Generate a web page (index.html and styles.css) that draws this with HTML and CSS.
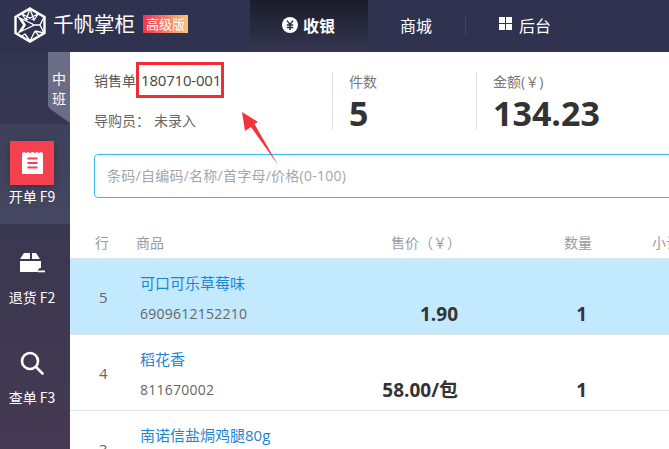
FILE: index.html
```html
<!DOCTYPE html>
<html lang="zh">
<head>
<meta charset="utf-8">
<title>千帆掌柜</title>
<link rel="stylesheet" href="styles.css">
</head>
<body>
<div class="app">
  <header class="topbar">
    <div class="brand">
      <svg class="logo" width="32" height="36" viewBox="0 0 32 36" fill="none" stroke="#fff">
        <path d="M16 1.500 L30.500 10 V26 L16 34.500 L1.500 26 V10 Z" stroke-width="2.400"/>
        <path d="M16 2 L8 7 L12 13 L16 2 L20 13 L24 7 L16 2 M8 7 L20 13 M24 7 L12 13 M24 7 L30 10 L26 18 L30 26 M26 18 L21 18 M21 24 L16 34 L11 27 L6 30 M21 24 L25 29 L16 34 M21 24 L30 26 M11 27 L16 34" stroke-width="1.300"/>
        <path d="M3 9 L22 18 L3 27 L9 18 Z" fill="#fff" stroke="none"/>
        <path d="M9 13 L19 18 L9 23 L12 18 Z" fill="#2f3350" stroke="none"/>
      </svg>
      <span class="brand-name">千帆掌柜</span>
      <span class="badge">高级版</span>
    </div>
    <nav class="nav">
      <a class="nav-item active">
        <svg width="16" height="16" viewBox="0 0 16 16"><circle cx="8" cy="8" r="8" fill="#fff"/><path d="M5 3.600 L8 7.400 L11 3.600 M4.800 8 H11.200 M4.800 10.400 H11.200 M8 7.400 V13" fill="none" stroke="#282a40" stroke-width="1.500"/></svg>
        <span>收银</span>
      </a>
      <a class="nav-item shop"><span>商城</span></a>
      <a class="nav-item back">
        <svg width="13" height="13" viewBox="0 0 13 13" fill="#fff"><rect width="6" height="6"/><rect x="7" width="6" height="6"/><rect y="7" width="6" height="6"/><rect x="7" y="7" width="6" height="6"/></svg>
        <span>后台</span>
      </a>
    </nav>
  </header>
  <div class="body">
    <aside class="sidebar">
      <div class="shift-row"><div class="shift">中<br>班</div></div>
      <div class="side-item current">
        <div class="side-icon red">
          <svg width="21" height="22" viewBox="0 0 21 22"><path d="M0 1 L2 0 L4 1 L6 0 L8 1 L10.500 0 L13 1 L15 0 L17 1 L19 0 L21 1 V22 H0 Z" fill="#fff"/><path d="M5.500 6.500 H15.500 M5.500 11 H15.500 M5.500 15.500 H15.500" stroke="#f4404f" stroke-width="2"/></svg>
        </div>
        <span>开单 F9</span>
      </div>
      <div class="side-item">
        <div class="side-icon">
          <svg width="25" height="20" viewBox="0 0 25 20" fill="#fff"><path d="M4 0 H10 V6 H0 Z M12 0 H16 L20 6 H12 Z M0 8 H21 V15 A3 3 0 0 0 18 19 H0 Z"/><rect x="18" y="17.500" width="7" height="1.800"/></svg>
        </div>
        <span>退货 F2</span>
      </div>
      <div class="side-item">
        <div class="side-icon">
          <svg width="24" height="24" viewBox="0 0 24 24" fill="none" stroke="#fff" stroke-width="2.600"><circle cx="10" cy="10" r="8"/><path d="M16 16 L22.500 22.500" stroke-linecap="round"/></svg>
        </div>
        <span>查单 F3</span>
      </div>
    </aside>
    <main class="main">
      <section class="summary">
        <div class="order">
          <div class="order-line"><span>销售单</span><span class="order-no">180710-001</span></div>
          <div class="order-line guide"><span>导购员：</span><span>未录入</span></div>
        </div>
        <div class="stat count">
          <div class="stat-label">件数</div>
          <div class="stat-value">5</div>
        </div>
        <div class="stat amount">
          <div class="stat-label">金额(￥)</div>
          <div class="stat-value">134.23</div>
        </div>
      </section>
      <div class="search">条码/自编码/名称/首字母/价格(0-100)</div>
      <section class="table">
        <div class="row head">
          <div>行</div><div>商品</div><div class="price">售价（￥）</div><div class="qty">数量</div><div class="sub">小计</div>
        </div>
        <div class="row item selected">
          <div class="idx">5</div>
          <div class="goods"><a>可口可乐草莓味</a><span>6909612152210</span></div>
          <div class="price val">1.90</div><div class="qty val">1</div><div></div>
        </div>
        <div class="row item">
          <div class="idx">4</div>
          <div class="goods"><a>稻花香</a><span>811670002</span></div>
          <div class="price val">58.00/包</div><div class="qty val">1</div><div></div>
        </div>
        <div class="row item">
          <div class="idx">3</div>
          <div class="goods"><a>南诺信盐焗鸡腿80g</a><span></span></div>
          <div></div><div></div><div></div>
        </div>
      </section>
    </main>
  </div>
  <svg class="arrow" width="38" height="54" viewBox="0 0 38 54"><path d="M0 0 L3 19 L9 15 L36 53 L12.500 12 L16 10 Z" fill="#f5333c"/></svg>
</div>
</body>
</html>
```

FILE: styles.css
```css
* { box-sizing: border-box; }
html, body { margin: 0; height: 100%; }
body {
  overflow: hidden;
  background: #fff;
  font-family: "Open Sans", "Noto Sans CJK SC", sans-serif;
  color: #555;
}
.app { position: relative; width: 669px; height: 449px; overflow: hidden; }

/* top bar */
.topbar { display: flex; height: 52px; background: #2f3350; color: #fff; }
.brand { display: flex; align-items: center; width: 250px; padding: 0 0 3px 14px; }
.logo { flex: none; }
.brand-name { margin-left: 7px; font-size: 20.500px; font-weight: 400; line-height: 1; }
.badge {
  margin-left: 8px; margin-top: -2px; width: 45px; height: 18px;
  background: linear-gradient(90deg, #f3334f, #fbc47c);
  font-size: 13px; line-height: 18px; text-align: center; white-space: nowrap;
}
.nav { display: flex; font-family: "Noto Sans CJK SC", sans-serif; }
.nav-item { display: flex; align-items: center; height: 52px; font-size: 16px; padding-bottom: 3px; }
.nav-item.active {
  width: 118px; padding-left: 32px; gap: 5px; font-weight: 700;
  background: linear-gradient(180deg, #1b1c2b, #33364f);
}
.nav-item.shop { width: 98px; padding-left: 32px; position: relative; }
.nav-item.shop::after {
  content: ""; position: absolute; right: 0; top: 17px; height: 18px; width: 1px; background: #434766;
}
.nav-item.back { padding-left: 33px; gap: 7px; }
.nav-item.back svg { margin-top: -3px; }

/* layout */
.body { display: flex; height: 397px; }
.sidebar {
  flex: none; width: 70px; display: flex; flex-direction: column;
  background: linear-gradient(180deg, #33354f, #443a52);
  color: #fff; font-size: 14px; font-family: "Noto Sans CJK SC", sans-serif;
}
.shift-row { display: flex; justify-content: flex-end; height: 72px; }
.shift {
  width: 22px; height: 71px; padding-top: 16px;
  background: #6b6c85; color: #fff; font-size: 14px; line-height: 20px; text-align: center;
  clip-path: polygon(0 0, 100% 0, 100% 100%, 82% 96%, 9% 80%, 0 76%);
}
.side-item { height: 100px; display: flex; flex-direction: column; align-items: center; padding: 17px 6px 0 0; }
.side-item > span { margin-top: 3px; line-height: 19px; white-space: nowrap; }
.side-item.current { background: linear-gradient(180deg, #3f415c, #45465f); }
.side-item.current > span { margin-top: 2px; }
.side-icon { width: 44px; height: 44px; display: flex; align-items: center; justify-content: center; }
.side-icon.red { background: #f4404f; box-shadow: 0 2px 8px rgba(0,0,0,.25); }

/* main */
.main { flex: none; width: 660px; }
.summary { display: flex; height: 102px; padding-top: 20px; }
.order { width: 262px; padding-left: 24px; font-size: 14px; color: #555; margin-top: -2px; }
.order-line { display: flex; align-items: center; height: 20px; white-space: nowrap; }
.order-no { margin-left: 5px; font-size: 15px; color: #444; letter-spacing: -0.200px; }
.guide { margin-top: 20px; gap: 4px; color: #666; }
.stat { border-left: 1px solid #e1e3ea; height: 58px; padding-left: 16px; }
.count { width: 144px; }
.amount { flex: 1; }
.stat-label { font-size: 14px; color: #777; line-height: 20px; }
.stat-value { font-size: 34px; font-weight: 700; color: #333; line-height: 43px; }

.search {
  margin-left: 24px; width: 620px; height: 44px; padding: 0 12px;
  border: 1px solid #3db7f0; border-radius: 4px;
  color: #a5a5aa; font-size: 14px; letter-spacing: 0.250px; line-height: 42px; white-space: nowrap;
}

.table { margin-top: 26px; }
.row { display: grid; grid-template-columns: 66px 182px 140px 134px 80px; }
.head {
  height: 35px; padding-top: 3px; align-items: center; color: #9a9aa2; font-size: 14px; line-height: 20px;
  border-bottom: 1px solid #e1e3ea;
}
.head > div:first-child { padding-left: 25px; }
.head .price { text-align: right; white-space: nowrap; margin-right: -3px; }
.head .qty { text-align: right; white-space: nowrap; }
.head .sub { padding-left: 60px; white-space: nowrap; }
.item { height: 76px; border-bottom: 1px solid #e1e3ea; }
.item.selected { background: #c3e9fe; }
.idx { padding: 28px 0 0 29px; font-size: 15px; line-height: 20px; color: #666; }
.goods { display: flex; flex-direction: column; padding: 14px 0 0 4px; white-space: nowrap; }
.goods a { color: #1b86d0; font-size: 15px; line-height: 20px; }
.goods span { margin-top: 11px; height: 20px; color: #666; font-size: 14px; letter-spacing: 0.250px; line-height: 20px; }
.val { padding-top: 43px; font-size: 19px; font-weight: 700; color: #333; line-height: 24px; text-align: right; white-space: nowrap; }
.qty.val { padding-right: 5px; }

/* annotation overlays */
.order-no { position: relative; }
.order-no::after {
  content: ""; position: absolute; left: -5px; right: -3px; top: -8px; bottom: -8px;
  border: 3px solid #ee2e32;
}
.arrow { position: absolute; left: 242px; top: 112px; }
```
